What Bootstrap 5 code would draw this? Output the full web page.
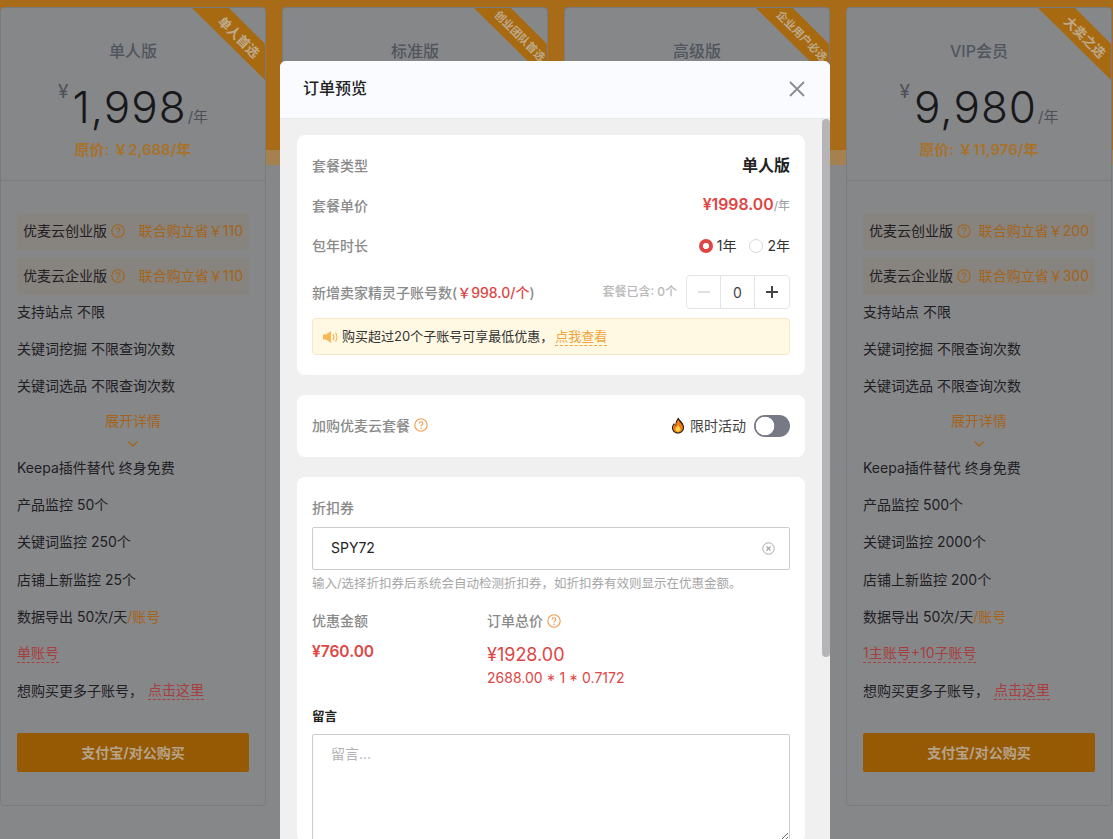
<!DOCTYPE html>
<html lang="zh-CN">
<head>
<meta charset="utf-8">
<title>订单预览</title>
<link href="https://cdn.jsdelivr.net/npm/bootstrap@5.3.0/dist/css/bootstrap.min.css" rel="stylesheet">
<style>
html,body{height:100%;overflow:hidden}
body{font-family:Inter,"Noto Sans CJK SC",sans-serif;font-size:14px;color:#1f2024;
 background:linear-gradient(#a86c18 0,#a86c18 150px,#a5814f 150px,#a5814f 165px,#868789 165px)}
.plans{display:grid;grid-template-columns:repeat(4,266px);column-gap:16px;padding-top:7px}
.plan{position:relative;height:799px;background:#868789;border:1px solid #7a7b7e;border-radius:4px;overflow:hidden;--bs-card-bg:#868789}
.plan-head{height:173px;border-bottom:1px solid #7a7b7e;text-align:center;padding-top:31px}
.plan-name{font-size:16px;line-height:24px;color:#50555e;font-weight:500}
.price-row{margin-top:15px;height:58px;align-items:flex-end}
.yen{align-self:flex-start;font-size:19px;line-height:20px;margin:4px 4px 0 0;color:#4d5058}
.amount{font-size:44px;line-height:58px;color:#17181a;font-weight:300;letter-spacing:1px}
.per{font-size:15px;line-height:20px;margin:0 0 9px 1px;color:#4d5058}
.orig{font-size:15px;line-height:22px;margin-top:3px;color:#a8722a;font-weight:600}
.plan-body{padding:32px 16px 0}
.bundle{height:37px;background:#87837e;margin-bottom:8px;padding:0 6px 2px;display:flex;align-items:center}
.bundle-save{margin-left:auto;color:#a4641a}
.qmark{display:inline-block;width:14px;height:14px;margin-left:4px;flex:none;vertical-align:-2px}
.feat{height:37.2px;display:flex;align-items:center}
.feat-tight{margin-top:-10px}
.expand{height:44.400px;text-align:center;color:#a4641a;padding-top:6px;line-height:20px}
.expand svg{display:block;margin:9px auto 0}
.hl-o{color:#a4641a}
.hl-r{color:#a63f3f;border-bottom:1px dashed #a63f3f;line-height:18px}
.ml-pick{margin-left:5px}
.buy{display:block;width:232px;height:39px;margin-top:24px;--bs-btn-bg:#965a04;--bs-btn-border-color:#965a04;--bs-btn-color:#b5a38b;font-weight:700;font-size:14px;border-radius:2px}
.ribbon{position:absolute;top:0;right:0;width:73px;height:72px;background:#a86a10;clip-path:polygon(0 0,37px 0,73px 36px,73px 72px)}
.ribbon span{position:absolute;left:5px;top:20px;width:84px;text-align:center;transform:rotate(45deg);color:#bda98c;font-weight:700;font-size:13px;line-height:18px;white-space:nowrap}
.ribbon .tiny{font-size:11px;left:10px;width:72px;top:19px}
.order-modal{overflow:hidden}
.order-dialog{max-width:550px;width:550px;margin:61px 0 0 280px}
.order-content{border:0;border-radius:6px 6px 0 0;background:#f0f0f0}
.order-head{height:58px;padding:0 24px 2px 23px;background:#f9fbff;border-bottom:1px solid #e8e8e8;border-radius:6px 6px 0 0}
.order-title{font-size:16px;font-weight:500;color:#222;line-height:24px;margin-bottom:2px}
.closer{width:16px;height:16px;padding:0;border:0;background:none;margin-left:auto;margin-right:1px;line-height:0}
.order-body{height:721px;overflow:hidden;position:relative;padding:16px 25px 0 17px;flex:none}
.thumb{position:absolute;top:0;right:0;width:8px;height:538px;background:#b5b5b8;border-radius:4px}
.sect{background:#fff;border-radius:8px;padding:0 15px;margin-bottom:20px}
.sect-1{height:240px;padding-top:10px}
.sect-2{height:62px}
.sect-3{padding-top:21px;margin-bottom:0}
.line{height:40px;display:flex;align-items:center;justify-content:space-between}
.lbl{color:#8a8a8a;font-weight:500}
.lift{margin-bottom:2px}
.plan-type{font-size:16px;font-weight:700;color:#222}
.unit-price{font-size:15.800px;font-weight:600;color:#e04545}
.unit{font-size:12px;color:#999}
.radios{display:flex;align-items:center;gap:13px;color:#333}
.radios .form-check-input{width:14px;height:14px;margin:0 4px 0 0;vertical-align:-2px;border-color:#d9d9d9}
.radios .form-check-input:checked{background-color:#fff;border:0;background-image:radial-gradient(circle,#fff 2.8px,#e04545 3.4px)}
.seats{height:48px;margin-top:3px;display:flex;align-items:center}
.seat-price{color:#e04545}
.seat-incl{margin-left:auto;margin-right:9px;font-size:12px;color:#b8b8b8;font-weight:500}
.stepper{width:104px;height:34px;flex:none;flex-wrap:nowrap}
.stepper .btn{width:35px;height:34px;padding:0;--bs-btn-border-color:#e5e5e5;--bs-btn-bg:#fff;line-height:0;border-radius:4px}
.stepper .btn:last-child{width:36px}
.stepper .form-control{width:35px;flex:none;min-width:0;height:34px;padding:0;text-align:center;border-color:#e5e5e5;font-size:14px;color:#444;box-shadow:none}
.tip{height:37px;background:#fff8e3;border:1px solid #f3e8c8;border-radius:4px;display:flex;align-items:center;padding:0 10px;margin-top:2px;color:#333;font-size:13px}
.tip svg{margin-right:3px;flex:none}
.tip-link{color:#f2a33a;border-bottom:1px dashed #f2a33a;margin-left:2px;line-height:17px}
.hot{color:#444;display:flex;align-items:center;margin-bottom:2px}
.hot svg{margin-right:5px}
.sw{margin:0 0 0 8px;padding:0;min-height:0}
.sw .form-check-input{width:36px;height:22px;margin:0;float:none;display:block;border:0;background-color:#777985;
 background-image:radial-gradient(circle at 11px 11px,#fff 9px,transparent 9.6px);background-size:auto}
.flbl{line-height:20px;margin-bottom:9px;display:block}
.coupon{position:relative}
.coupon .form-control{height:43px;border-radius:2px;padding:0 18px 2px;border-color:#ccc;font-size:14px;color:#222;box-shadow:none}
.coupon svg{position:absolute;right:15px;top:15px}
.help{font-size:12.5px;color:#a6a6a6;margin-top:5px;line-height:18px}
.totals{display:grid;grid-template-columns:175px 1fr;margin-top:17px}
.off{font-size:15.5px;font-weight:600;color:#e04545;line-height:22px;margin-top:10px}
.total{font-size:18px;font-weight:400;color:#e04545;line-height:24px;margin-top:12px}
.calc{font-size:14px;color:#e04545;line-height:20px;margin-top:1px}
.note-lbl{font-size:12.5px;font-weight:700;color:#222;line-height:18px;margin-top:20px;margin-bottom:8px;display:block}
.note{height:108px;border-radius:2px;border-color:#ccc;padding:8px 18px;font-size:14px;box-shadow:none}
.note::placeholder{color:#b3b3b3}
.q-soft{color:#ee9a4a}
</style>
</head>
<body>
<svg width="0" height="0" class="d-none"><defs>
<symbol id="qm" viewBox="0 0 14 14"><circle cx="7" cy="7" r="6.2" fill="none" stroke="currentColor" stroke-width="1.1"/><path d="M5.1 5.5c0-1.1.9-1.8 1.9-1.8s1.9.7 1.9 1.7c0 1.4-1.9 1.5-1.9 3" fill="none" stroke="currentColor" stroke-width="1.1"/><circle cx="7" cy="10.3" r=".75" fill="currentColor"/></symbol>
<symbol id="chev" viewBox="0 0 12 8"><path d="M1.5 1.5 6 6l4.5-4.5" fill="none" stroke="currentColor" stroke-width="1.3"/></symbol>
</defs></svg>

<div class="plans">
  <div class="card plan">
    <div class="ribbon"><span>单人首选</span></div>
    <div class="plan-head">
      <div class="plan-name">单人版</div>
      <div class="d-flex justify-content-center price-row"><span class="yen">¥</span><span class="amount">1,998</span><span class="per">/年</span></div>
      <div class="orig">原价: ￥2,688/年</div>
    </div>
    <div class="plan-body">
      <div class="bundle">优麦云创业版<svg class="qmark hl-o"><use href="#qm"/></svg><span class="bundle-save">联合购立省￥110</span></div>
      <div class="bundle">优麦云企业版<svg class="qmark hl-o"><use href="#qm"/></svg><span class="bundle-save">联合购立省￥110</span></div>
      <div class="feat feat-tight">支持站点 不限</div>
      <div class="feat">关键词挖掘 不限查询次数</div>
      <div class="feat">关键词选品 不限查询次数</div>
      <div class="expand">展开详情<svg width="12" height="8" class="hl-o"><use href="#chev"/></svg></div>
      <div class="feat">Keepa插件替代 终身免费</div>
      <div class="feat">产品监控 50个</div>
      <div class="feat">关键词监控 250个</div>
      <div class="feat">店铺上新监控 25个</div>
      <div class="feat">数据导出 50次/天<span class="hl-o">/账号</span></div>
      <div class="feat"><span class="hl-r">单账号</span></div>
      <div class="feat">想购买更多子账号，<span class="hl-r ml-pick">点击这里</span></div>
      <button type="button" class="btn buy">支付宝/对公购买</button>
    </div>
  </div>
  <div class="card plan">
    <div class="ribbon"><span class="tiny">创业团队首选</span></div>
    <div class="plan-head"><div class="plan-name">标准版</div></div>
  </div>
  <div class="card plan">
    <div class="ribbon"><span class="tiny">企业用户必选</span></div>
    <div class="plan-head"><div class="plan-name">高级版</div></div>
  </div>
  <div class="card plan">
    <div class="ribbon"><span>大卖之选</span></div>
    <div class="plan-head">
      <div class="plan-name">VIP会员</div>
      <div class="d-flex justify-content-center price-row"><span class="yen">¥</span><span class="amount">9,980</span><span class="per">/年</span></div>
      <div class="orig">原价: ￥11,976/年</div>
    </div>
    <div class="plan-body">
      <div class="bundle">优麦云创业版<svg class="qmark hl-o"><use href="#qm"/></svg><span class="bundle-save">联合购立省￥200</span></div>
      <div class="bundle">优麦云企业版<svg class="qmark hl-o"><use href="#qm"/></svg><span class="bundle-save">联合购立省￥300</span></div>
      <div class="feat feat-tight">支持站点 不限</div>
      <div class="feat">关键词挖掘 不限查询次数</div>
      <div class="feat">关键词选品 不限查询次数</div>
      <div class="expand">展开详情<svg width="12" height="8" class="hl-o"><use href="#chev"/></svg></div>
      <div class="feat">Keepa插件替代 终身免费</div>
      <div class="feat">产品监控 500个</div>
      <div class="feat">关键词监控 2000个</div>
      <div class="feat">店铺上新监控 200个</div>
      <div class="feat">数据导出 50次/天<span class="hl-o">/账号</span></div>
      <div class="feat"><span class="hl-r">1主账号+10子账号</span></div>
      <div class="feat">想购买更多子账号，<span class="hl-r ml-pick">点击这里</span></div>
      <button type="button" class="btn buy">支付宝/对公购买</button>
    </div>
  </div>
</div>

<div class="modal d-block order-modal">
  <div class="modal-dialog order-dialog">
    <div class="modal-content order-content">
      <div class="modal-header order-head">
        <h5 class="modal-title order-title">订单预览</h5>
        <button type="button" class="closer" aria-label="关闭"><svg width="16" height="16" viewBox="0 0 16 16"><path d="M1 1l14 14M15 1 1 15" stroke="#8c8c8c" stroke-width="1.8" fill="none"/></svg></button>
      </div>
      <div class="modal-body order-body">
        <div class="thumb"></div>
        <section class="sect sect-1">
          <div class="line"><span class="lbl">套餐类型</span><span class="plan-type">单人版</span></div>
          <div class="line"><span class="lbl">套餐单价</span><span><span class="unit-price">¥1998.00</span><span class="unit">/年</span></span></div>
          <div class="line"><span class="lbl">包年时长</span>
            <div class="radios">
              <label><input class="form-check-input" type="radio" name="yrs" checked>1年</label>
              <label><input class="form-check-input" type="radio" name="yrs">2年</label>
            </div>
          </div>
          <div class="seats"><span class="lbl">新增卖家精灵子账号数(<span class="seat-price">￥998.0/个</span>)</span>
            <span class="seat-incl">套餐已含: 0个</span>
            <div class="input-group stepper">
              <button type="button" class="btn" aria-label="减少"><svg width="14" height="14" viewBox="0 0 14 14"><path d="M1 7h12" stroke="#d8d8d8" stroke-width="1.6"/></svg></button>
              <input class="form-control" value="0" aria-label="数量">
              <button type="button" class="btn" aria-label="增加"><svg width="14" height="14" viewBox="0 0 14 14"><path d="M1 7h12M7 1v12" stroke="#444" stroke-width="2"/></svg></button>
            </div>
          </div>
          <div class="tip">
            <svg width="16" height="14" viewBox="0 0 16 14"><path d="M0 4.500h3L8 1v12L3 9.500H0z" fill="#f7b955"/><path d="M10 4.200c1 1.500 1 4.100 0 5.600M12.500 2.500c1.700 2.500 1.700 6.500 0 9" fill="none" stroke="#f7b955" stroke-width="1.300"/></svg>
            购买超过20个子账号可享最低优惠，<span class="tip-link">点我查看</span>
          </div>
        </section>
        <section class="sect sect-2 d-flex align-items-center justify-content-between">
          <span class="lbl lift d-flex align-items-center">加购优麦云套餐<svg class="qmark q-soft"><use href="#qm"/></svg></span>
          <div class="d-flex align-items-center">
            <span class="hot"><svg width="14" height="17" viewBox="0 0 14 17"><path d="M7.500.500c.5 2.500 5.500 5 5.500 10 0 3.500-2.700 6-6 6s-6-2.500-6-5.800c0-2.200 1.200-3.500 2-4.700.3 1 .8 1.700 1.500 2C4.300 5 5.700 2.200 7.500.500z" fill="#1d1209"/><path d="M7.300 2.500c.7 2.200 4.700 4.300 4.700 8 0 3-2.300 5-5 5s-5-2-5-4.800c0-1.500.6-2.600 1.200-3.500.4.800 1 1.300 1.900 1.500C4.900 6.300 5.800 4.200 7.300 2.500z" fill="#f07a12"/><path d="M7 8c.5 1.400 2.500 2.300 2.500 4.200 0 1.500-1.100 2.500-2.500 2.500s-2.500-1-2.500-2.400C4.500 10.500 6.300 9.700 7 8z" fill="#fbd24c"/></svg>限时活动</span>
            <div class="form-check form-switch sw"><input class="form-check-input" type="checkbox" role="switch" aria-label="限时活动"></div>
          </div>
        </section>
        <section class="sect sect-3">
          <label class="lbl flbl">折扣券</label>
          <div class="coupon">
            <input class="form-control" value="SPY72" aria-label="折扣券">
            <svg width="13" height="13" viewBox="0 0 13 13"><circle cx="6.500" cy="6.500" r="5.700" fill="none" stroke="#a8a8a8" stroke-width="1"/><path d="M4.500 4.500l4 4M8.500 4.500l-4 4" stroke="#a8a8a8" stroke-width="1.300"/></svg>
          </div>
          <div class="help">输入/选择折扣券后系统会自动检测折扣券，如折扣券有效则显示在优惠金额。</div>
          <div class="totals">
            <div><div class="lbl">优惠金额</div><div class="off">¥760.00</div></div>
            <div><div class="lbl d-flex align-items-center">订单总价<svg class="qmark q-soft"><use href="#qm"/></svg></div><div class="total">¥1928.00</div><div class="calc">2688.00 * 1 * 0.7172</div></div>
          </div>
          <label class="note-lbl" for="note">留言</label>
          <textarea id="note" class="form-control note" placeholder="留言..."></textarea>
        </section>
      </div>
    </div>
  </div>
</div>
<script src="https://cdn.jsdelivr.net/npm/bootstrap@5.3.0/dist/js/bootstrap.bundle.min.js"></script>
</body>
</html>
